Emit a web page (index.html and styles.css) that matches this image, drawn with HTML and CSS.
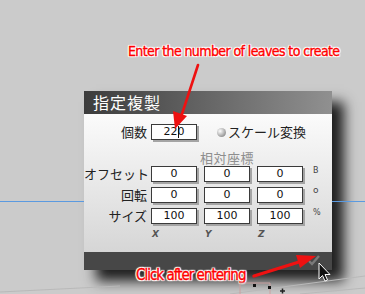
FILE: index.html
```html
<!DOCTYPE html>
<html lang="ja">
<head>
  <meta charset="UTF-8">
  <meta name="viewport" content="width=device-width, initial-scale=1.0">
  <title>指定複製</title>
  <link rel="stylesheet" href="styles.css">
</head>
<body>
  <div class="desk">
    <div class="panel">
      <div class="panel-header">指定複製</div>
      <div class="panel-body">
        <div class="count-row">
          <span class="label">個数</span>
          <div class="field">220<span class="caret"></span></div>
          <span class="radio"></span>
          <span class="radio-text">スケール変換</span>
        </div>
        <div class="coord-title">相対座標</div>
        <div class="coord-grid">
          <span class="label">オフセット</span>
          <div class="field">0</div>
          <div class="field">0</div>
          <div class="field">0</div>
          <span class="unit unit-b">B</span>

          <span class="label">回転</span>
          <div class="field">0</div>
          <div class="field">0</div>
          <div class="field">0</div>
          <span class="unit unit-o">o</span>

          <span class="label">サイズ</span>
          <div class="field">100</div>
          <div class="field">100</div>
          <div class="field">100</div>
          <span class="unit">%</span>

          <span></span>
          <span class="axis">X</span>
          <span class="axis">Y</span>
          <span class="axis">Z</span>
        </div>
      </div>
      <div class="panel-footer">
        <svg class="ok-icon" width="12" height="11" viewBox="0 0 12 11">
          <path d="M1 6 L4 9 L11 1" fill="none" stroke="#7a7a7a" stroke-width="2.4"/>
        </svg>
      </div>
    </div>

    <!-- annotations laid over the screenshot -->
    <div class="note note-top">Enter the number of leaves to create</div>
    <div class="note note-bottom">Click after entering</div>

    <svg class="overlay" width="365" height="294" viewBox="0 0 365 294">
      <!-- ground grid and guide line -->
      <path d="M0 292 L120 286 M230 294 L365 276 M300 294 L365 288" stroke="#b9b9b9" stroke-width="1" fill="none"/>
      <path d="M0 201.5 H84 M332 201.5 H365" stroke="#5b9ae0" stroke-width="1"/>
      <path d="M240 283 L270 283 M240 283 L240 294 M270 283 L270 294" stroke="#c9a0a0" stroke-width="1" fill="none"/>
      <rect x="253" y="284" width="3" height="3" fill="#111"/>
      <rect x="268" y="286" width="3" height="3" fill="#111"/>
      <path d="M280 291 h5 M282.5 288.5 v5" stroke="#222" stroke-width="1.5"/>
      <!-- arrows -->
      <g stroke="#ee1111" fill="#ee1111" stroke-linecap="round">
        <path d="M198 65 L182 114" stroke-width="2.6" fill="none"/>
        <path d="M175 129 L173 111 L187 116 Z" stroke="none"/>
        <path d="M254 276 L299 262" stroke-width="3.4" fill="none"/>
        <path d="M316 256 L296 255 L300 268 Z" stroke="none"/>
      </g>
      <!-- mouse pointer -->
      <path d="M319 263 L319 279 L322.5 275.5 L325 281 L327.5 280 L325 274.5 L330 274.5 Z" fill="#111" stroke="#fff" stroke-width="1"/>
    </svg>
  </div>
</body>
</html>
```

FILE: styles.css
```css
body, html {
  margin: 0;
  padding: 0;
}
body {
  width: 365px;
  height: 294px;
  overflow: hidden;
  background: #cbcbcb;
  font-family: "Noto Sans CJK JP", "DejaVu Sans", sans-serif;
}
.desk {
  position: relative;
  width: 365px;
  height: 294px;
  padding: 91px 0 0 84px;
  box-sizing: border-box;
}
.panel {
  position: relative;
  width: 248px;
  height: 179px;
  display: flex;
  flex-direction: column;
  box-shadow: 12px 11px 12px rgba(0, 0, 0, 0.85);
}
.panel-header {
  height: 23px;
  background: linear-gradient(90deg, #3c3c3c, #909090);
  color: #fff;
  font-size: 16px;
  line-height: 23px;
  padding-left: 9px;
  letter-spacing: 1px;
}
.panel-body {
  flex: 1;
  background: linear-gradient(180deg, #fbfbfb, #d6d6d6);
  padding-top: 10px;
  font-size: 13px;
  color: #222;
}
.count-row {
  display: flex;
  align-items: center;
  height: 16px;
}
.label {
  width: 63px;
  text-align: right;
  padding-right: 4px;
  box-sizing: border-box;
  white-space: nowrap;
  line-height: 16px;
}
.count-row .label {
  width: 67px;
}
.field {
  position: relative;
  width: 46px;
  height: 16px;
  box-sizing: border-box;
  background: #fff;
  border: 1px solid #3a3a3a;
  box-shadow: 2px 2px 0 #a4a4a4;
  font-family: "DejaVu Sans", sans-serif;
  font-size: 11px;
  line-height: 14px;
  text-align: center;
  color: #111;
}
.caret {
  position: absolute;
  left: 26px;
  top: 1px;
  width: 1px;
  height: 12px;
  background: #111;
}
.radio {
  width: 9px;
  height: 9px;
  border-radius: 50%;
  margin-left: 20px;
  background: radial-gradient(circle at 35% 35%, #fff, #a8a8a8 60%, #6e6e6e);
}
.radio-text {
  margin-left: 2px;
  font-size: 13px;
  line-height: 16px;
}
.coord-title {
  margin-top: 9px;
  padding-left: 116px;
  font-size: 13px;
  line-height: 17px;
  color: #8e8e8e;
  letter-spacing: 0.5px;
}
.coord-grid {
  display: grid;
  grid-template-columns: 67px 53px 53px 53px 20px;
  grid-auto-rows: 16px;
  row-gap: 5px;
}
.coord-grid .label {
  width: 67px;
}
.unit {
  font-family: "DejaVu Sans", sans-serif;
  font-size: 8px;
  color: #444;
  line-height: 10px;
  padding-left: 3px;
}
.unit-o {
  font-size: 9px;
  margin-top: -2px;
}
.axis {
  font-family: "DejaVu Sans", sans-serif;
  font-style: italic;
  font-weight: bold;
  font-size: 9px;
  color: #555;
  padding-left: 1px;
  line-height: 10px;
}
.panel-footer {
  height: 18px;
  background: #474747;
  display: flex;
  justify-content: flex-end;
  align-items: center;
}
.ok-icon {
  margin-right: 12px;
  margin-top: -2px;
}
.overlay {
  position: absolute;
  left: 0;
  top: 0;
}
.note {
  position: absolute;
  color: #f00;
  font-family: "DejaVu Sans Condensed", "DejaVu Sans", sans-serif;
  white-space: nowrap;
  -webkit-text-stroke: 0.35px #f00;
  text-shadow: 1px 0 1px #fff, -1px 0 1px #fff, 0 1px 1px #fff, 0 -1px 1px #fff,
    1px 1px 1px #fff, -1px -1px 1px #fff, 1px -1px 1px #fff, -1px 1px 1px #fff;
}
.note-top {
  left: 128px;
  top: 43px;
  font-size: 14px;
  letter-spacing: -0.6px;
}
.note-bottom {
  left: 136px;
  top: 266px;
  font-size: 15px;
  letter-spacing: -1px;
}
```
